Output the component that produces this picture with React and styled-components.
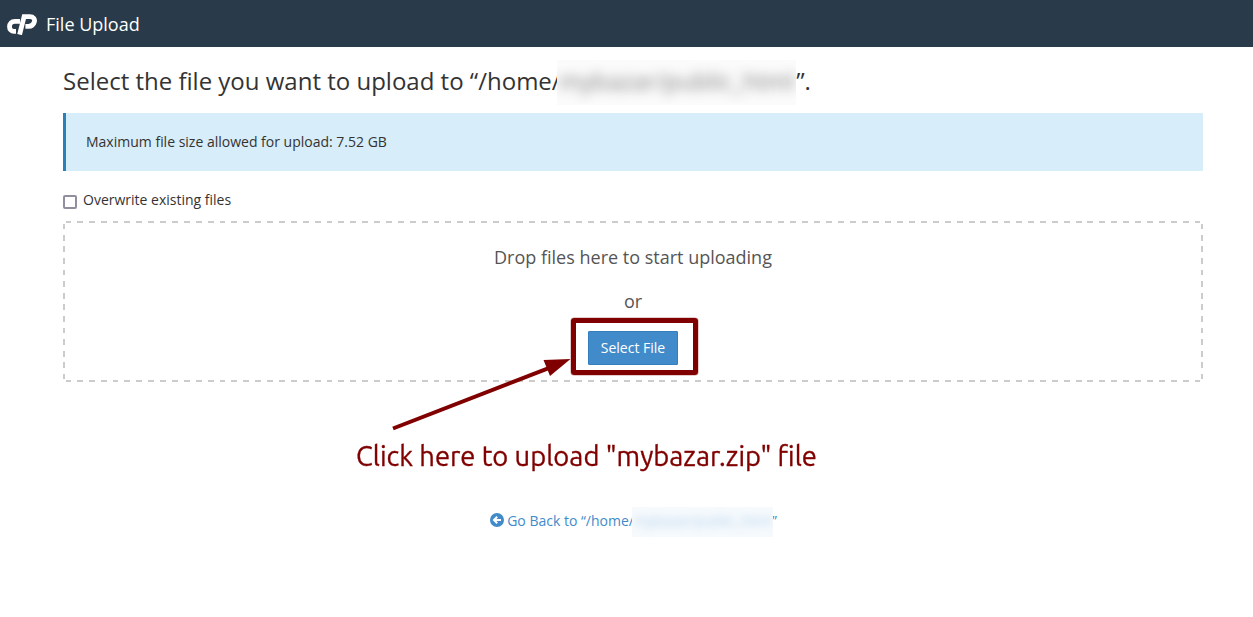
import React from 'react';
import styled, { createGlobalStyle } from 'styled-components';

const GlobalStyle = createGlobalStyle`
  * { box-sizing: border-box; }
  body { margin: 0; background: #fff; color: #333; overflow: hidden;
    font: 14px/20px "Open Sans", "Noto Sans", sans-serif; }
`;
const Header = styled.header`
  height: 47px; background: #293a4a; color: #fff; display: flex; align-items: center;
  padding: 1px 0 0 7px; gap: 9px; font-size: 18px;
`;
const Logo = styled.svg`width: 30px; height: 21px; display: block; margin-top: 1px;`;
const Main = styled.main`width: 1140px; margin: 0 0 0 63px; display: flex; flex-direction: column;`;
const Title = styled.h1`
  font-size: 24px; line-height: 41px; font-weight: 400; margin: 13px 0 0; height: 53px;
  display: flex; align-items: flex-start; white-space: pre;
`;
const Redacted = styled.span`
  display: inline-flex; justify-content: center; overflow: hidden; flex: none; position: relative;
  width: ${p => p.$w}px; height: ${p => p.$h}px; line-height: ${p => p.$lh}px;
  margin: 0 ${p => p.$mr || 0}px 0 ${p => p.$ml}px;
  background: ${p => p.$bg};
  span { filter: blur(${p => p.$blur}px); opacity: ${p => p.$o}; }
`;
const Notice = styled.div`
  height: 58px; background: #d7edf9; border-left: 3px solid #2a80b9; padding: 19px 20px;
`;
const CheckRow = styled.label`
  display: flex; align-items: flex-start; gap: 6px; margin-top: 19px; height: 31px;
`;
const Check = styled.input`
  appearance: none; width: 14px; height: 14px; margin: 5px 0 0; background: #fff;
  border: 2px solid #8f8f9d; border-radius: 2px;
`;
const dashes = (dir, on, off, period) =>
  `repeating-linear-gradient(${dir}, #ccc 0 ${on}px, transparent ${on}px ${off}px, #ccc ${off}px ${period}px)`;
const across = dashes('90deg', 4.9, 10.84, 11.89);
const down = dashes('180deg', 5, 10.8, 11.6);
const DropZone = styled.section`
  height: 161px; color: #555; font-size: 18px;
  background:
    ${across} 3px 0 / 1134px 2px no-repeat,
    ${across} 3px 159px / 1134px 2px no-repeat,
    ${down} 0 3px / 2px 155px no-repeat,
    ${down} 1138px 3px / 2px 155px no-repeat;
  display: flex; flex-direction: column; align-items: center; padding-top: 23px;
`;
const DropText = styled.p`margin: 0; height: 44px; line-height: 26px;`;
const ButtonWrap = styled.div`position: relative; margin-top: -1px;`;
const Button = styled.button`
  display: block; width: 90px; height: 34px; padding: 0; background: #428bca; color: #fff;
  border: 1px solid #357ebd; border-radius: 1px; font: 14px/20px "Open Sans", sans-serif;
`;
const Highlight = styled.div`
  position: absolute; left: -17px; top: -13px; width: 127px; height: 57px;
  border: 5px solid #800000; border-radius: 3px; box-shadow: 0 0 0 0.5px rgba(128, 0, 0, 0.4);
`;
const Arrow = styled.svg`position: absolute; left: -198px; top: 24px; width: 186px; height: 80px;`;
const Caption = styled.p`
  margin: 53px 0 0 293px; height: 40px; font: 28px/41px Ubuntu, "Noto Sans", sans-serif;
  color: #800000; white-space: nowrap;
`;
const CaptionText = styled.span`
  display: inline-block; transform-origin: 0 50%; transform: scaleX(0.976);
  -webkit-text-stroke: 0.35px #800000;
`;
const Back = styled.a`
  display: flex; align-self: center; margin-top: 32px; height: 30px; line-height: 28px; color: #428bca;
  white-space: pre;
`;
const BackIcon = styled.svg`width: 14px; height: 14px; margin: 6px 3.5px 0 0.5px;`;

export default function App() {
  return (
    <>
      <GlobalStyle />
      <Header>
        <Logo viewBox="0 0 30 21" fill="none" stroke="#fff" strokeWidth="4.8">
          <path d="M13 7.4H7.8C4.6 7.4 2.5 9.8 2.5 12.8C2.5 15.6 4.4 17.4 7 17.4H9" />
          <path d="M12.6 20.6L17.1 2.6H22.8C26.4 2.6 28.2 5 27.3 8C26.5 10.7 24.4 12.4 21.6 12.4H18.4" />
        </Logo>
        <span>File Upload</span>
      </Header>
      <Main>
        <Title>
          <span>Select the file you want to upload to “/home/</span>
          <Redacted $w={239} $h={45} $lh={41} $ml={-3.5} $bg="#fbfbfb" $blur={6} $o={0.64}><span>mybazar/public_html</span></Redacted>
          <span>”.</span>
        </Title>
        <Notice>Maximum file size allowed for upload: 7.52 GB</Notice>
        <CheckRow><Check type="checkbox" /><span>Overwrite existing files</span></CheckRow>
        <DropZone>
          <DropText>Drop files here to start uploading</DropText>
          <DropText>or</DropText>
          <ButtonWrap>
            <Button>Select File</Button>
            <Highlight />
            <Arrow viewBox="0 0 186 80">
              <path d="M3 73.5L160 12.7" stroke="#800000" strokeWidth="4" />
              <path d="M153.5 5L180.5 4L160 21Z" fill="#800000" />
            </Arrow>
          </ButtonWrap>
        </DropZone>
        <Caption><CaptionText>Click here to upload "mybazar.zip" file</CaptionText></Caption>
        <Back>
          <BackIcon viewBox="0 0 14 14">
            <circle cx="7" cy="7" r="7" fill="#428bca" />
            <path d="M7.2 3.8L4 7L7.2 10.2M4.4 7H11" fill="none" stroke="#fff" strokeWidth="2" />
          </BackIcon>
          <span>Go Back to “/home/</span>
          <Redacted $w={141} $h={30} $lh={28} $ml={-1.5} $mr={-1.5} $bg="#f6fafd" $blur={4} $o={0.4}><span>mybazar/public_html</span></Redacted>
          <span>”</span>
        </Back>
      </Main>
    </>
  );
}
